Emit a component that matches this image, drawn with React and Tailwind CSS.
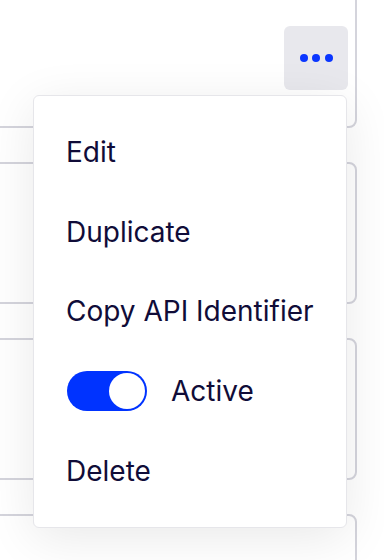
export default function App() {
  const cards = [0, 1, 2, 3];
  return (
    <div className="relative h-[560px] w-[384px] overflow-hidden bg-white font-['Inter',sans-serif]">
      <div className="-ml-[20px] -mt-[14px] flex w-[377px] flex-col gap-[34px]">
        {cards.map((i) => (
          <div
            key={i}
            className="flex h-[142px] items-start justify-end rounded-lg border-2 border-[#d4d4dc] bg-white pr-[7px] pt-[38px]"
          >
            {i === 0 && (
              <button className="flex h-[64px] w-[64px] items-center justify-center gap-[4.5px] rounded-md bg-[#e8e8ed]">
                <span className="h-[8px] w-[8px] rounded-full bg-[#0a36ff]" />
                <span className="h-[8px] w-[8px] rounded-full bg-[#0a36ff]" />
                <span className="h-[8px] w-[8px] rounded-full bg-[#0a36ff]" />
              </button>
            )}
          </div>
        ))}
      </div>
      <div className="absolute left-[33px] top-[95px] flex h-[433px] w-[314px] flex-col rounded-md border border-[#e6e6ea] bg-white py-4 text-[28px] leading-none text-[#100c38] shadow-[0_10px_50px_rgba(0,0,0,0.09)]">
        <div className="flex h-[80px] items-center px-[32px]">Edit</div>
        <div className="flex h-[80px] items-center px-[32px]">Duplicate</div>
        <div className="flex h-[80px] items-center px-[32px]">Copy API Identifier</div>
        <div className="flex h-[80px] items-center gap-[24px] px-[33px]">
          <div className="flex h-[40px] w-[80px] items-center justify-end rounded-full bg-[#0033ff] p-[2px]">
            <div className="h-[36px] w-[36px] rounded-full bg-white" />
          </div>
          <span>Active</span>
        </div>
        <div className="flex h-[80px] items-center px-[32px]">Delete</div>
      </div>
    </div>
  );
}
